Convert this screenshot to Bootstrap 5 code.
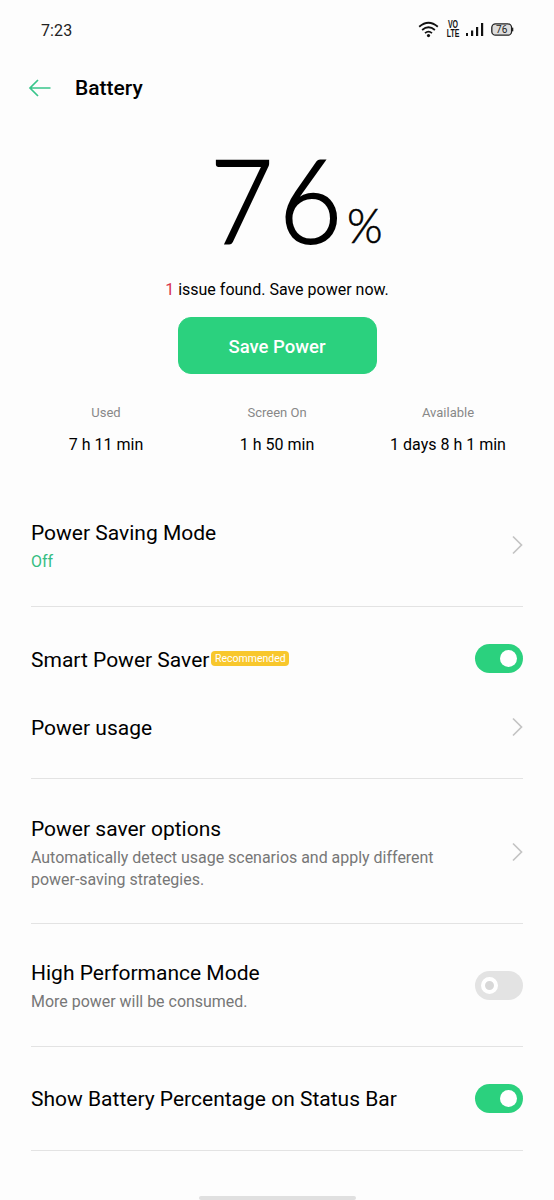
<!DOCTYPE html>
<html lang="en">
<head>
<meta charset="utf-8">
<meta name="viewport" content="width=device-width, initial-scale=1">
<title>Battery</title>
<link href="https://cdn.jsdelivr.net/npm/bootstrap@5.3.0/dist/css/bootstrap.min.css" rel="stylesheet">
<style>
body{font-family:Roboto,"Liberation Sans",sans-serif;color:#000;background:#fdfdfd;height:1200px;overflow:hidden}
.status{height:58px;padding:0 40px 0 41px}
.clock{font-family:Roboto,sans-serif;font-size:16px;line-height:20px;color:#222;letter-spacing:.1px;padding-top:3px}
.volte{font:700 10px/9px "Liberation Sans",sans-serif;color:#111;width:12px;transform:scale(.7,1);margin-left:8px}
.volte span{display:block;margin:0 -5px}
.head{height:60px;padding-left:28px}
.head h1{font-size:21px;line-height:28px;font-weight:500;letter-spacing:0}
.level{height:152px;padding:23px 0 0 210px;font-family:Lato,sans-serif;line-height:1}
.level .num{font-size:116px;font-weight:300;letter-spacing:6px;-webkit-text-stroke:2px #000;transform:scaleX(.94);transform-origin:0 50%;width:137px}
.level .pct{font-size:48px;font-weight:300;-webkit-text-stroke:.6px #000;transform:scaleX(.95);transform-origin:0 50%}
.issue{font-size:16px;line-height:24px;height:24px;margin-top:8px}
.issue span{color:#d8344f}
.btn-save{--bs-btn-bg:#2bd17e;--bs-btn-color:#fff;--bs-btn-border-color:#2bd17e;--bs-btn-padding-y:0;width:199px;height:57px;border-radius:13px;font-size:18.5px;font-weight:500;margin-top:15px;padding-top:4px}
.stats{width:513px;margin:29px auto 0;height:77px}
.stats dt{font-size:13px;line-height:20px;font-weight:400;color:#888}
.stats dd{font-size:16px;line-height:24px;margin:10px 0 0}
.item{margin:0 31px}
.ruled{border-bottom:1px solid #e3e3e3}
.item h2{font-size:21px;line-height:28px;font-weight:400;margin:0}
.item p{font-size:15.960px;line-height:22px;margin:4px 0 0;color:#777}
.item p.state{color:#35bd83}
.tag{background:#f8c72c;color:#fff;font-size:10.5px;line-height:16px;height:15px;width:78px;border-radius:4px;margin-left:2px}
.toggle{width:48px;height:29px;border-radius:15px;background:#2bd17e;padding:6px}
.toggle i{display:block;width:17px;height:17px;border-radius:50%;background:#fff;margin-left:auto}
.toggle.off{background:#e3e3e3}
.toggle.off i{margin-left:0;border:4px solid #fff;background:#d8d8d8}
.homebar{width:157px;height:4px;border-radius:2px;background:#e0e0e0;margin:45px auto 0}
</style>
</head>
<body>
<header class="status d-flex align-items-center">
<span class="clock">7:23</span>
<div class="ms-auto d-flex align-items-center">
<svg width="21" height="17" viewBox="0 0 21 17" fill="none" stroke="#111" stroke-width="1.8"><path d="M1.200 5.800Q10.500-2.200 19.800 5.800M4.100 9Q10.500 3.600 16.900 9M7 12.100Q10.500 9.200 14 12.100"/><circle cx="10.500" cy="14.600" r="1.600" fill="#111" stroke="none"/></svg>
<div class="volte text-center"><span>VO</span><span>LTE</span></div>
<svg style="margin-left:7px" width="18" height="15" viewBox="0 0 18 15" fill="#111"><path d="M0 11h2v3H0zM5 8.500h2.200V14H5zM10 5h2.200v9H10zM15 1h2.200v13H15z"/></svg>
<svg style="margin-left:7px" width="23" height="13" viewBox="0 0 23 13"><rect x=".8" y=".8" width="19.800" height="11.400" rx="3.800" fill="#ddd" stroke="#222" stroke-width="1.300"/><path d="M21.600 4.700v3.600" stroke="#222" stroke-width="1.400"/><text x="10.700" y="10.200" text-anchor="middle" font-family="Roboto" font-size="10" fill="#222">76</text></svg>
</div>
</header>
<div class="head d-flex align-items-center">
<svg width="24" height="20" viewBox="0 0 24 20" fill="none" stroke="#38c58b" stroke-width="1.700"><path d="M22.500 10H2M10 2L2 10l8 8"/></svg>
<h1 class="mb-0" style="margin-left:23px">Battery</h1>
</div>
<main>
<div class="level d-flex align-items-baseline"><span class="num">76</span><span class="pct">%</span></div>
<p class="issue text-center mb-0"><span>1</span> issue found. Save power now.</p>
<div class="text-center"><button class="btn btn-save">Save Power</button></div>
<dl class="stats row g-0 text-center">
<div class="col-4"><dt>Used</dt><dd>7 h 11 min</dd></div>
<div class="col-4"><dt>Screen On</dt><dd>1 h 50 min</dd></div>
<div class="col-4"><dt>Available</dt><dd>1 days 8 h 1 min</dd></div>
</dl>
<section class="item ruled d-flex align-items-center justify-content-between" style="height:127px;padding-top:3px">
<div style="padding-top:3px"><h2>Power Saving Mode</h2><p class="state">Off</p></div>
<svg width="12" height="20" viewBox="0 0 12 20" fill="none" stroke="#c4c4c4" stroke-width="1.700"><path d="M2 1.500L10.500 10l-8.500 8.500"/></svg>
</section>
<section class="item d-flex align-items-center" style="height:103px">
<h2 style="padding-top:2px">Smart Power Saver</h2><span class="tag text-center">Recommended</span>
<span class="toggle ms-auto"><i></i></span>
</section>
<section class="item ruled d-flex justify-content-between" style="height:69px;padding-top:4px">
<h2>Power usage</h2>
<svg style="margin-top:3px" width="12" height="20" viewBox="0 0 12 20" fill="none" stroke="#c4c4c4" stroke-width="1.700"><path d="M2 1.500L10.500 10l-8.500 8.500"/></svg>
</section>
<section class="item ruled d-flex align-items-center justify-content-between" style="height:145px;padding-top:1px">
<div style="padding-top:2px"><h2>Power saver options</h2><p>Automatically detect usage scenarios and apply different<br>power-saving strategies.</p></div>
<svg width="12" height="20" viewBox="0 0 12 20" fill="none" stroke="#c4c4c4" stroke-width="1.700"><path d="M2 1.500L10.500 10l-8.500 8.500"/></svg>
</section>
<section class="item ruled d-flex align-items-center justify-content-between" style="height:123px">
<div style="padding-top:2px"><h2>High Performance Mode</h2><p>More power will be consumed.</p></div>
<span class="toggle off"><i></i></span>
</section>
<section class="item ruled d-flex align-items-center justify-content-between" style="height:104px">
<h2 style="padding-top:1px">Show Battery Percentage on Status Bar</h2>
<span class="toggle"><i></i></span>
</section>
</main>
<div class="homebar"></div>
<script src="https://cdn.jsdelivr.net/npm/bootstrap@5.3.0/dist/js/bootstrap.bundle.min.js"></script>
</body>
</html>
